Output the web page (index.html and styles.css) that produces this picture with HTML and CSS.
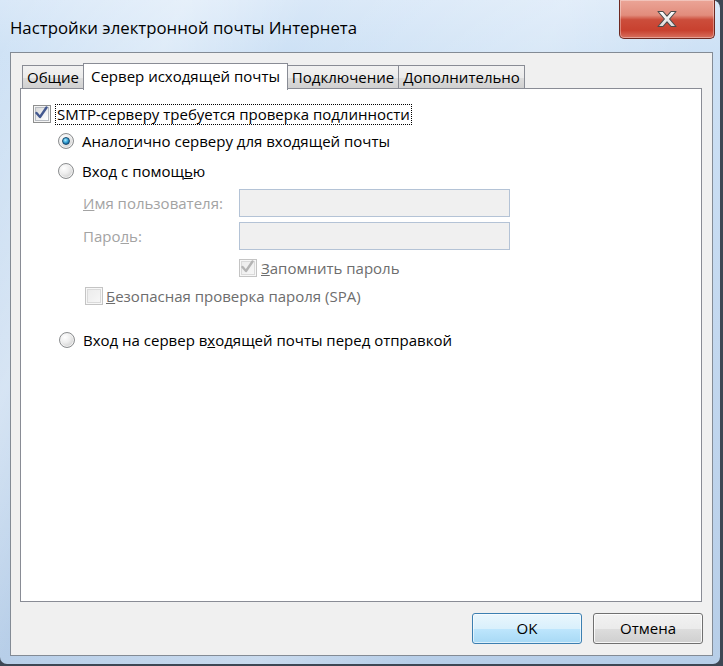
FILE: index.html
```html
<!DOCTYPE html>
<html lang="ru">
<head>
<meta charset="utf-8">
<title>Настройки электронной почты Интернета</title>
<link rel="stylesheet" href="styles.css">
</head>
<body>
<div class="window">
  <div class="titlebar">
    <div class="title">Настройки электронной почты Интернета</div>
    <div class="close">
      <svg width="24" height="18" viewBox="0 0 24 18">
        <defs>
          <linearGradient id="xg" x1="0" y1="0" x2="0" y2="1">
            <stop offset="0" stop-color="#ffffff"/>
            <stop offset="1" stop-color="#d9d9d9"/>
          </linearGradient>
        </defs>
        <polygon points="3,1.5 8,1.5 12,6.2 16,1.5 21,1.5 14.6,9 21,16.5 16,16.5 12,11.8 8,16.5 3,16.5 9.4,9" fill="url(#xg)" stroke="#4b4b4b" stroke-width="1.1" stroke-linejoin="round"/>
      </svg>
    </div>
  </div>
  <div class="client">
    <div class="tabs">
      <div class="tab tab-general">Общие</div>
      <div class="tab tab-active">Сервер исходящей почты</div>
      <div class="tab tab-connect">Подключение</div>
      <div class="tab tab-extra">Дополнительно</div>
    </div>
    <div class="panel">
      <div class="row row-smtp">
        <span class="check"><span class="box"><svg class="tick" width="13" height="13" viewBox="0 0 13 13"><path d="M1.5 7 L5 11 L11.5 1.5" fill="none" stroke="#43588f" stroke-width="2.4" stroke-linecap="round" stroke-linejoin="round"/></svg></span></span>
        <span class="label focus">SMTP-серверу требуется проверка подлинности</span>
      </div>
      <div class="row row-radio1">
        <span class="radio on"><span class="dot"></span></span>
        <span class="label">Анало<u>г</u>ично серверу для входящей почты</span>
      </div>
      <div class="row row-radio2">
        <span class="radio"></span>
        <span class="label">Вход с помощ<u>ь</u>ю</span>
      </div>
      <div class="row row-field row-user">
        <span class="field-label"><u>И</u>мя пользователя:</span>
        <span class="input"></span>
      </div>
      <div class="row row-field row-pass">
        <span class="field-label">Паро<u>л</u>ь:</span>
        <span class="input"></span>
      </div>
      <div class="row row-remember">
        <span class="check disabled"><span class="box"><svg class="tick" width="13" height="13" viewBox="0 0 13 13"><path d="M1.5 7 L5 11 L11.5 1.5" fill="none" stroke="#b4b4b4" stroke-width="2.4" stroke-linecap="round" stroke-linejoin="round"/></svg></span></span>
        <span class="label dim"><u>З</u>апомнить пароль</span>
      </div>
      <div class="row row-spa">
        <span class="check disabled"><span class="box"></span></span>
        <span class="label dim"><u>Б</u>езопасная проверка пароля (SPA)</span>
      </div>
      <div class="row row-radio3">
        <span class="radio"></span>
        <span class="label">Вход на сервер в<u>х</u>одящей почты перед отправкой</span>
      </div>
    </div>
    <div class="buttons">
      <div class="btn btn-default">OK</div>
      <div class="btn">Отмена</div>
    </div>
  </div>
</div>
</body>
</html>
```

FILE: styles.css
```css
html, body {
  margin: 0;
  padding: 0;
}
body {
  background: #3d4754;
  width: 723px;
  height: 666px;
  overflow: hidden;
  font-family: "Open Sans", "Noto Sans", sans-serif;
  font-size: 15px;
  color: #000;
}
.window {
  width: 720px;
  height: 664px;
  box-sizing: border-box;
  padding: 0 7px 0 10px;
  border-radius: 0 8px 7px 7px;
  background:
    linear-gradient(115deg, rgba(255,255,255,0) 0%, rgba(255,255,255,0.35) 18%, rgba(255,255,255,0) 30%, rgba(255,255,255,0.25) 55%, rgba(255,255,255,0) 70%),
    linear-gradient(180deg, #d9e8f8 0%, #cde1f5 8%, #c3d8ef 50%, #b7cee8 100%);
}
.titlebar {
  height: 52px;
  display: flex;
  align-items: flex-start;
}
.title {
  margin-top: 17px;
  font-size: 16.8px;
  line-height: 22px;
  color: #000;
}
.close {
  margin-left: auto;
  margin-right: -2px;
  width: 96px;
  height: 39px;
  box-sizing: border-box;
  border: 1px solid #6d2820;
  border-top: none;
  border-radius: 0 0 5px 5px;
  background: linear-gradient(180deg, #eba597 0%, #e28c7c 40%, #cc4d3b 52%, #c8412f 80%, #d8705e 100%);
  box-shadow: inset 0 0 0 1px rgba(255,255,255,0.35);
  display: flex;
  align-items: center;
  justify-content: center;
}
.client {
  width: 703px;
  height: 604px;
  box-sizing: border-box;
  border: 1px solid #838b95;
  background: #f0f0f0;
  padding: 10px 0 0 0;
  display: flex;
  flex-direction: column;
}
.tabs {
  display: flex;
  align-items: flex-end;
  height: 26px;
  margin-left: 11px;
}
.tab {
  box-sizing: border-box;
  height: 24px;
  align-self: flex-start;
  margin-top: 2px;
  border: 1px solid #898c95;
  border-bottom: none;
  background: linear-gradient(180deg, #f2f2f2 0%, #ebebeb 50%, #dddddd 51%, #cfcfcf 100%);
  text-align: center;
  line-height: 22px;
  white-space: nowrap;
  margin-left: -1px;
}
.tab-general { width: 62px; margin-left: 0; }
.tab-active {
  width: 205px;
  height: 27px;
  margin-top: 0;
  background: #fff;
  position: relative;
  z-index: 2;
  line-height: 24px;
}
.tab-connect { width: 112px; }
.tab-extra { width: 127px; }
.panel {
  margin-left: 9px;
  margin-top: -1px;
  width: 682px;
  height: 514px;
  box-sizing: border-box;
  border: 1px solid #898c95;
  background: #fff;
  padding-top: 15px;
}
.row {
  display: flex;
  align-items: center;
  height: 20px;
  white-space: nowrap;
}
.label { line-height: 19px; }
.focus {
  outline: 1px dotted #000;
  outline-offset: 0;
  padding: 0 1px;
}
.dim { color: #6d6d6d; }
.row-smtp { padding-left: 12px; }
.row-smtp .check { margin-right: 6px; }
.row-radio1 { padding-left: 37px; margin-top: 7px; }
.row-radio2 { padding-left: 37px; margin-top: 10px; }
.row-radio1 .radio, .row-radio2 .radio, .row-radio3 .radio { margin-right: 8px; }
.row-field { height: 28px; padding-left: 62px; }
.row-user { margin-top: 8px; }
.row-pass { margin-top: 5px; }
.field-label {
  width: 156px;
  color: #a3a3a3;
}
.input {
  width: 271px;
  height: 28px;
  box-sizing: border-box;
  border: 1px solid #b4c3d6;
  background: #f0f0f0;
}
.row-remember { padding-left: 218px; margin-top: 8px; }
.row-remember .check { margin-right: 5px; }
.row-spa { padding-left: 64px; margin-top: 8px; }
.row-spa .check { margin-right: 4px; }
.row-radio3 { padding-left: 38px; margin-top: 24px; }

.check {
  width: 18px;
  height: 18px;
  box-sizing: border-box;
  border: 1px solid #8e8f8f;
  background: #f4f4f4;
  padding: 1px;
  flex: none;
}
.check .box {
  display: block;
  width: 14px;
  height: 14px;
  box-sizing: border-box;
  border: 1px solid #b8bcc2;
  background: linear-gradient(135deg, #d9d9d9 0%, #eeeeee 50%, #ffffff 100%);
  position: relative;
}
.check .tick {
  position: absolute;
  left: -1px;
  top: -2px;
}
.check.disabled {
  border-color: #c4c4c4;
  background: #f7f7f7;
}
.check.disabled .box {
  border-color: #dadada;
  background: linear-gradient(135deg, #ececec 0%, #f6f6f6 100%);
}
.row-smtp .check { margin-right: 5px; }
.row-remember .check { margin-right: 4px; }
.row-spa .check { margin-right: 3px; }
.radio {
  width: 16px;
  height: 16px;
  box-sizing: border-box;
  border-radius: 50%;
  border: 1px solid #8b8d8f;
  background: radial-gradient(circle at 35% 30%, #ffffff 0%, #eeeeee 40%, #d2d2d2 75%, #c4c4c4 100%);
  box-shadow: inset 0 0 0 1px #f2f2f2;
  display: flex;
  align-items: center;
  justify-content: center;
  flex: none;
}
.radio .dot {
  width: 8px;
  height: 8px;
  box-sizing: border-box;
  border-radius: 50%;
  border: 1px solid #1b4a6d;
  background: radial-gradient(circle at 40% 35%, #b9ecfc 0%, #4fb7e3 35%, #1574ad 70%, #0c4f84 100%);
}
.buttons {
  display: flex;
  justify-content: flex-end;
  gap: 11px;
  margin-top: 11px;
  padding-right: 9px;
}
.btn {
  width: 110px;
  height: 31px;
  box-sizing: border-box;
  border: 1px solid #707070;
  border-radius: 3px;
  background: linear-gradient(180deg, #f2f2f2 0%, #ebebeb 50%, #dddddd 51%, #cfcfcf 100%);
  box-shadow: inset 0 0 0 1px rgba(255,255,255,0.8);
  text-align: center;
  line-height: 28px;
}
.btn-default {
  border-color: #3c7fb1;
  background: linear-gradient(180deg, #eaf6fd 0%, #d9f0fc 50%, #bee6fd 51%, #a7d9f5 100%);
  box-shadow: inset 0 0 0 1px rgba(255,255,255,0.6);
}
```
